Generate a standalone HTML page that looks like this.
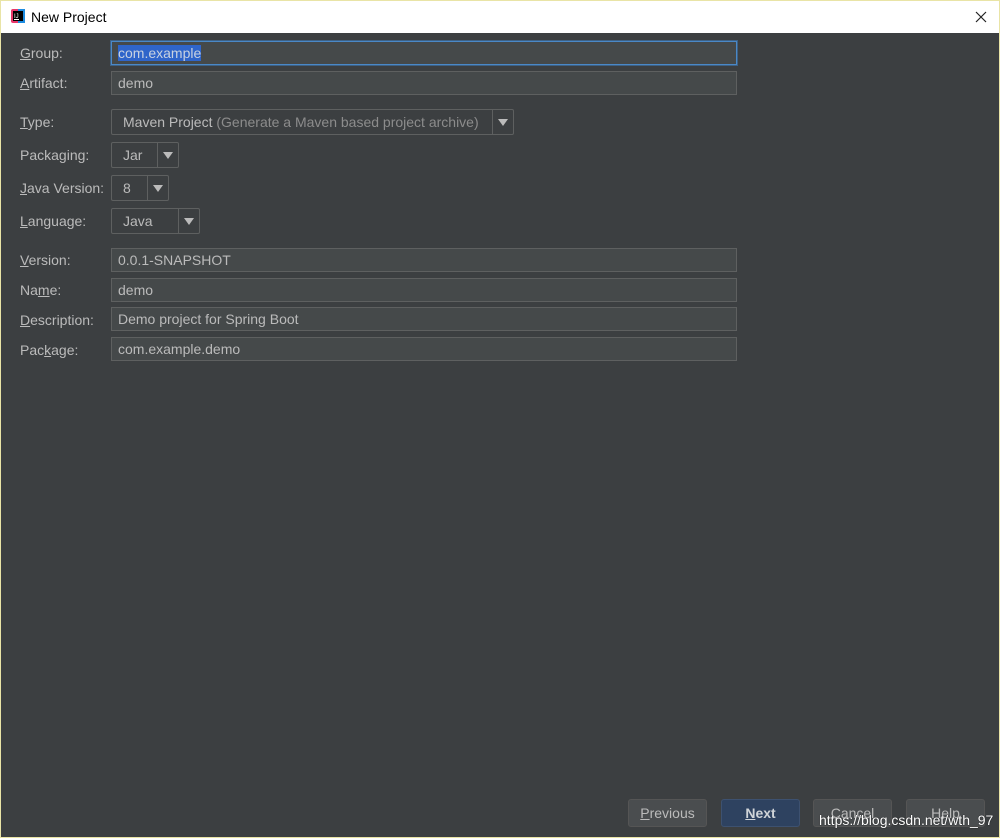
<!DOCTYPE html>
<html><head><meta charset="utf-8"><style>
*{box-sizing:border-box;margin:0;padding:0}
body{width:1000px;height:838px;overflow:hidden;background:#e9e4a6;font-family:"Liberation Sans","DejaVu Sans",sans-serif;position:relative}
#title{position:absolute;left:1px;top:1px;width:998px;height:32px;background:#fff}
#title .t{position:absolute;left:30px;top:8px;font-size:14px;color:#000}
#main{position:absolute;left:1px;top:33px;width:998px;height:804px;background:#3c3f41}
.l{position:absolute;left:19px;font-size:14px;color:#bbbbbb}
.f{position:absolute;left:110px;width:626px;height:24px;background:#45494a;border:1px solid #5e6060;font-size:14px;color:#bbbbbb;padding:3px 0 0 6px;white-space:nowrap}
.c{position:absolute;left:110px;height:26px;border:1px solid #5e6060;border-radius:2px;background:#3c3f41;font-size:14px;color:#bbbbbb;padding:4px 0 0 11px}
.c .a{position:absolute;right:0;top:0;height:24px;width:21px;border-left:1px solid #5e6060}
.c .a:after{content:"";position:absolute;left:5px;top:9px;border-left:5px solid transparent;border-right:5px solid transparent;border-top:7px solid #bbb}
.b{position:absolute;top:799px;height:28px;width:79px;border:1px solid #555;border-radius:3px;background:#4a4d4f;color:#bbbbbb;font-size:14px;text-align:center;padding-top:5px}
u{text-decoration:underline}
</style></head><body>
<div id="title">
<svg style="position:absolute;left:10px;top:8px" width="14" height="14"><rect x="0" y="0" width="14" height="14" rx="2" fill="#e8366a"/><rect x="7" y="0" width="7" height="14" fill="#1d8ce0"/><rect x="2" y="2" width="10" height="10" fill="#000"/><text x="3" y="9" font-size="6" fill="#fff" font-family="Liberation Sans">IJ</text><rect x="3" y="10" width="5" height="1" fill="#fff"/></svg>
<span class="t">New Project</span>
<svg style="position:absolute;left:974px;top:10px" width="12" height="12"><path d="M1 1L11 11M11 1L1 11" stroke="#222" stroke-width="1.2"/></svg>
</div>
<div id="main">
<div class="l" style="top:12px"><u>G</u>roup:</div>
<div class="f" style="top:8px;border:1px solid #4a88c7;box-shadow:0 0 0 1px #3d6185"><span style="background:#2f65ca;color:#c8d2e0">com.example</span></div>
<div class="l" style="top:42px"><u>A</u>rtifact:</div>
<div class="f" style="top:38px">demo</div>
<div class="l" style="top:81px"><u>T</u>ype:</div>
<div class="c" style="top:76px;width:403px">Maven Project <span style="color:#8c8c8c">(Generate a Maven based project archive)</span><div class="a"></div></div>
<div class="l" style="top:114px">Packa<u>g</u>ing:</div>
<div class="c" style="top:109px;width:68px">Jar<div class="a"></div></div>
<div class="l" style="top:147px"><u>J</u>ava Version:</div>
<div class="c" style="top:142px;width:58px">8<div class="a"></div></div>
<div class="l" style="top:180px"><u>L</u>anguage:</div>
<div class="c" style="top:175px;width:89px">Java<div class="a"></div></div>
<div class="l" style="top:219px"><u>V</u>ersion:</div>
<div class="f" style="top:215px">0.0.1-SNAPSHOT</div>
<div class="l" style="top:249px">Na<u>m</u>e:</div>
<div class="f" style="top:245px">demo</div>
<div class="l" style="top:279px"><u>D</u>escription:</div>
<div class="f" style="top:274px">Demo project for Spring Boot</div>
<div class="l" style="top:309px">Pac<u>k</u>age:</div>
<div class="f" style="top:304px">com.example.demo</div>
</div>
<div class="b" style="left:628px"><u>P</u>revious</div>
<div class="b" style="left:721px;background:#2e4260;border-color:#3d5170;color:#d0d4d8;font-weight:bold"><u>N</u>ext</div>
<div class="b" style="left:813px">Cancel</div>
<div class="b" style="left:906px">Help</div>
<div style="position:absolute;left:819px;top:812px;font-size:14px;color:#fff;text-shadow:0 0 1px #000">https://blog.csdn.net/wth_97</div>
</body></html>
